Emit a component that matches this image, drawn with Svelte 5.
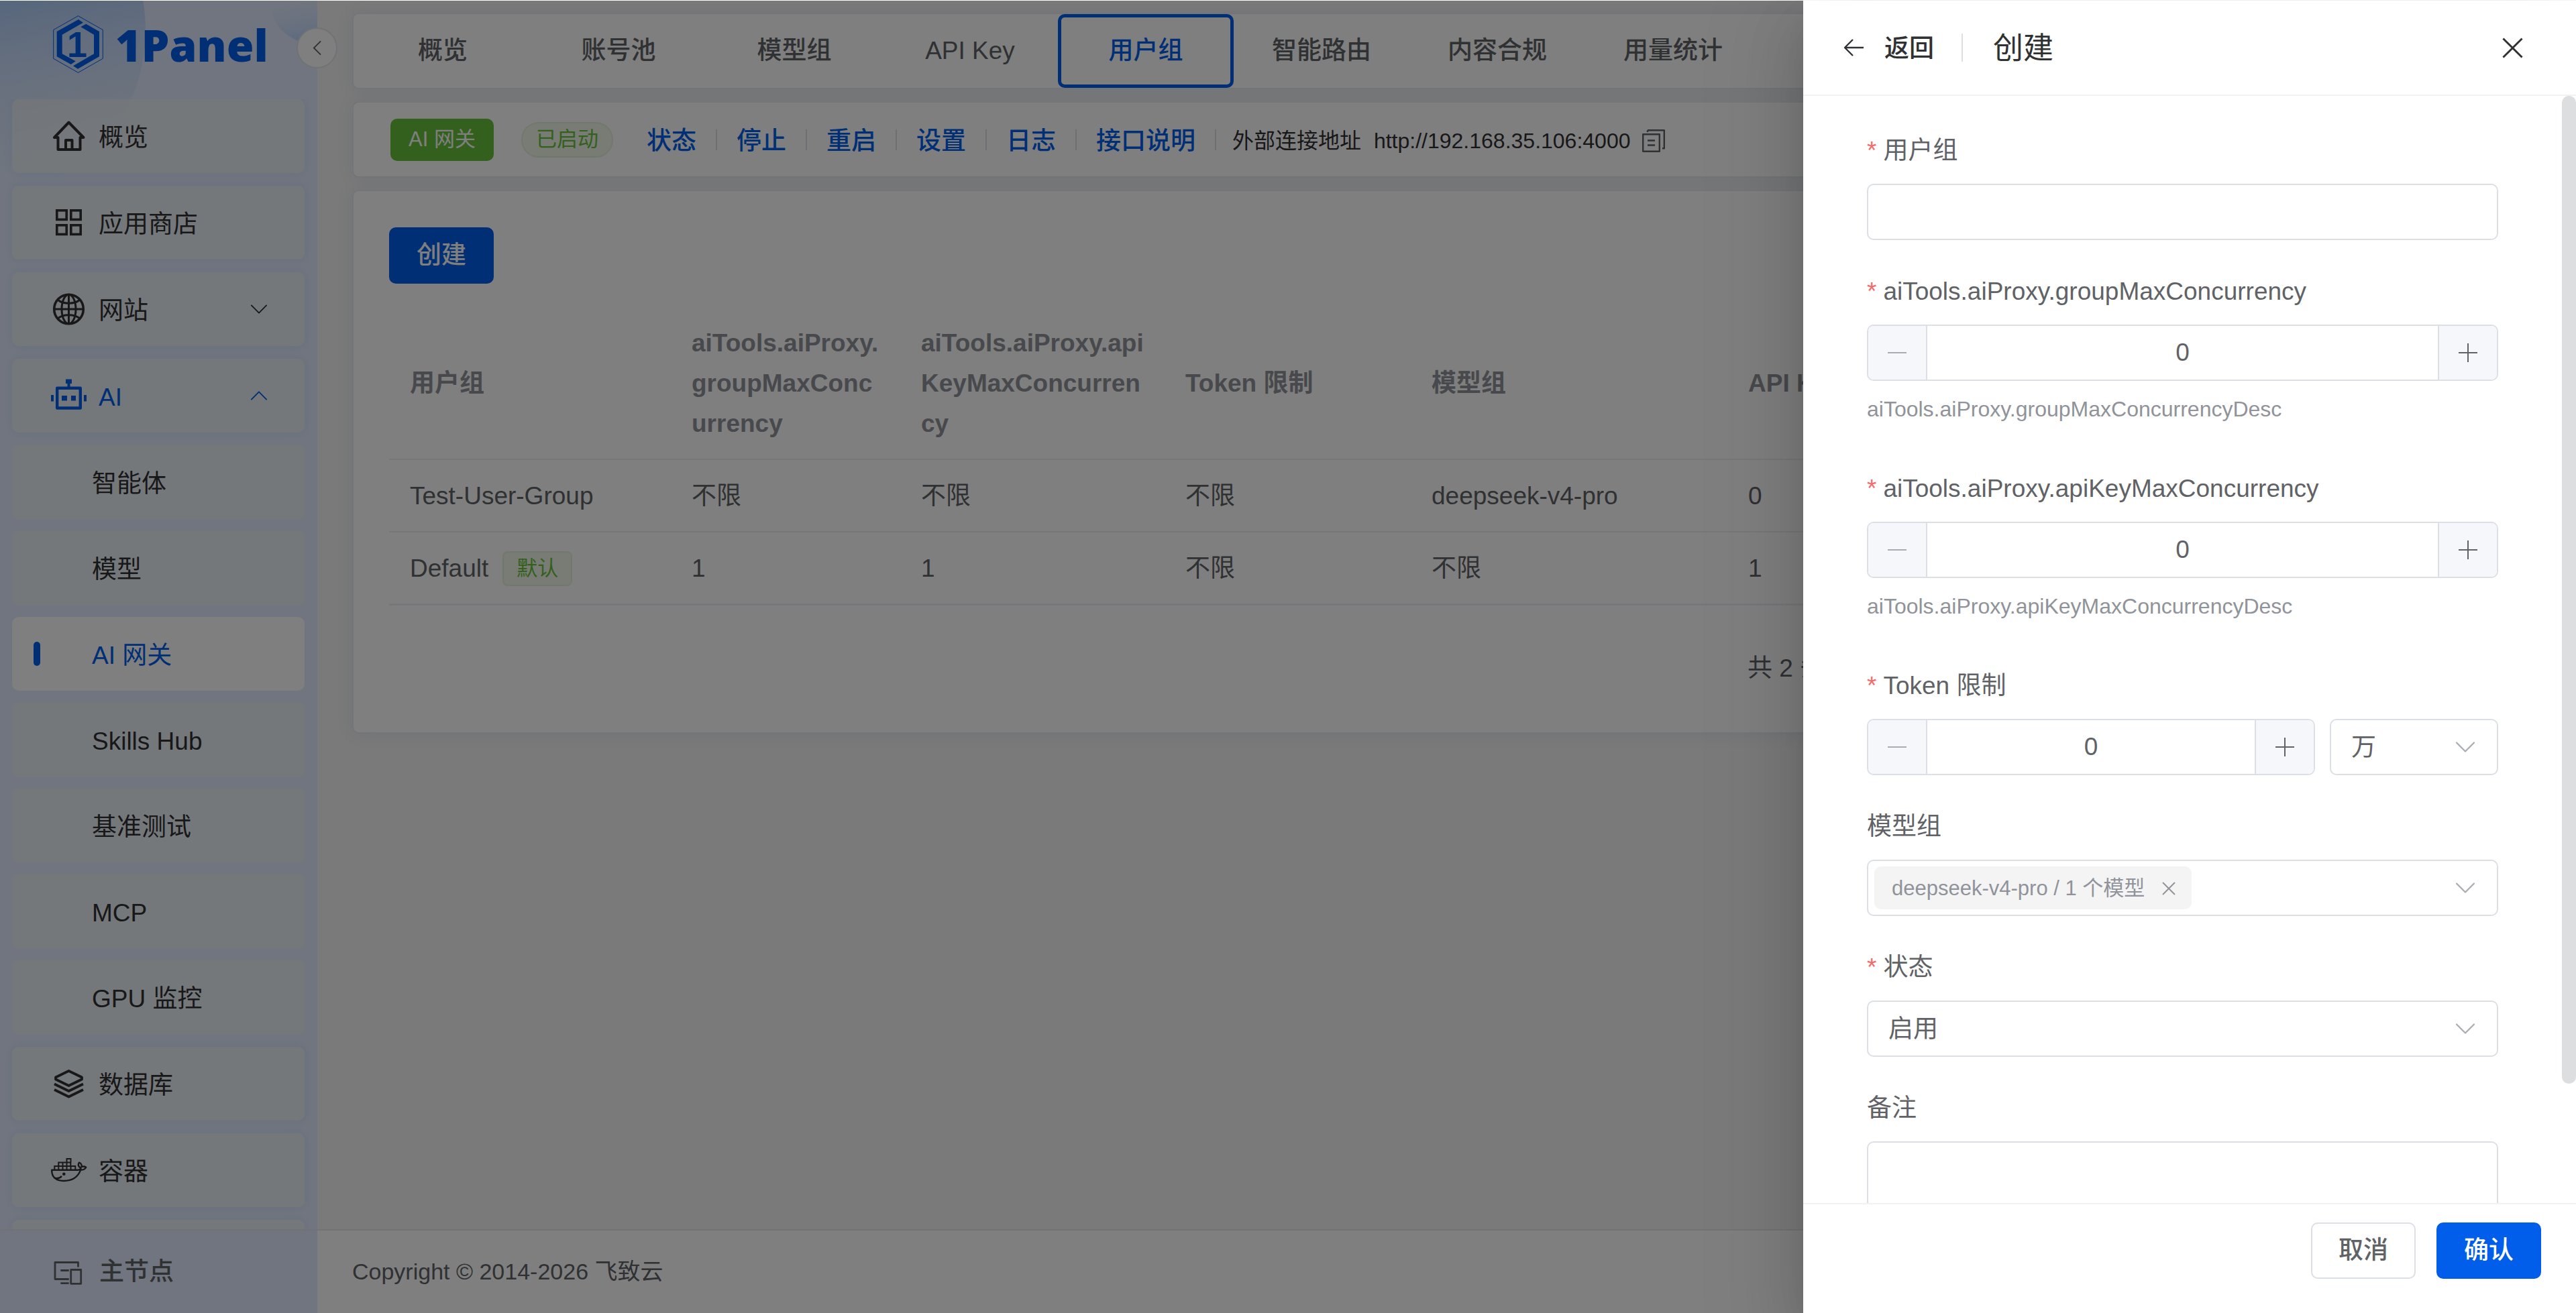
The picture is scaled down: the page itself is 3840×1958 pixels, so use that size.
<script>
  const topItems = [
    { label: '概览', icon: 'home' },
    { label: '应用商店', icon: 'apps' },
    { label: '网站', icon: 'globe', arrow: 'down' },
    { label: 'AI', icon: 'robot', arrow: 'up', open: true }
  ];
  const subItems = ['智能体', '模型', 'AI 网关', 'Skills Hub', '基准测试', 'MCP', 'GPU 监控'];
  const lowerItems = [
    { label: '数据库', icon: 'layers' },
    { label: '容器', icon: 'docker' }
  ];
  const tabs = ['概览', '账号池', '模型组', 'API Key', '用户组', '智能路由', '内容合规', '用量统计'];
  const actions = ['状态', '停止', '重启', '设置', '日志', '接口说明'];
  const columns = [
    '用户组',
    'aiTools.aiProxy.groupMaxConcurrency',
    'aiTools.aiProxy.apiKeyMaxConcurrency',
    'Token 限制',
    '模型组',
    'API Key'
  ];
  const rows = [
    ['Test-User-Group', '不限', '不限', '不限', 'deepseek-v4-pro', '0'],
    ['Default', '1', '1', '不限', '不限', '1']
  ];

  let name = $state('');
  let groupMax = $state(0);
  let keyMax = $state(0);
  let tokens = $state(0);
  let unit = $state('万');
  let status = $state('启用');
  let remark = $state('');
</script>

{#snippet icon(kind)}
  <svg class="menu-icon" viewBox="0 0 54 54" fill="none" stroke="currentColor" aria-hidden="true">
    {#if kind === 'home'}
      <path d="M26.5 6.5 5 29h5.500v18H43.500V29H48.500z" stroke-width="4" stroke-linejoin="round" />
      <path d="M22 47V33h9.500v14" stroke-width="4" stroke-linejoin="round" />
    {:else if kind === 'apps'}
      <g stroke-width="3.6">
        <rect x="8.800" y="8.800" width="14.400" height="13.600" />
        <rect x="29.800" y="8.800" width="14.400" height="13.600" />
        <rect x="8.800" y="30.800" width="14.400" height="13.600" />
        <rect x="29.800" y="30.800" width="14.400" height="13.600" />
      </g>
    {:else if kind === 'globe'}
      <g stroke-width="3.600">
        <circle cx="26.500" cy="27" r="21.800" />
        <ellipse cx="26.500" cy="27" rx="10.500" ry="21.800" stroke-width="3" />
        <path d="M26.500 5v44M5 27h43" stroke-width="3" />
        <path d="M10 13c8 7 25 7 33 0M10 41c8-7 25-7 33 0" stroke-width="3" />
      </g>
    {:else if kind === 'robot'}
      <rect x="9.200" y="15.700" width="34.600" height="29.800" stroke-width="4.400" stroke-linejoin="round" />
      <g fill="currentColor" stroke="none">
        <rect x="22" y="2.500" width="9" height="6.500" />
        <rect x="24.500" y="6" width="4" height="9" />
        <rect x="16" y="27" width="8" height="7.500" />
        <rect x="30" y="27" width="7" height="7.500" />
        <rect y="26" width="4" height="9.500" />
        <rect x="49" y="26" width="4" height="9.500" />
      </g>
    {:else if kind === 'layers'}
      <g stroke-width="3.800" stroke-linejoin="round">
        <path d="M26.500 8 46 17.500v3L26.500 30 7 20.500v-3z" />
        <path d="M5 27.500 26.500 38 48 27.500M5 36 26.500 46.500 48 36" />
      </g>
    {:else if kind === 'docker'}
      <path d="M1.200 26.700H41c3-1 4-2 3.500-3-4-2-4.500-5-2.500-8 3 1 4 4 3.600 6.200 3-.8 5-.4 6.600.8-1.500 3-4 4-8 4C40 38 32 43 19 43 7 43 1 37 1.200 26.700z" stroke-width="2.400" stroke-linejoin="round" />
      <path d="M5.300 26V21h31v5M11.300 21v-5.500h18V21M23.500 15.500V10h6v5.500M11.300 21v5M17.500 15.500V26M23.500 15.500V26M29.500 21v5" stroke-width="2" />
      <circle cx="19.300" cy="32.700" r="2.300" fill="currentColor" stroke="none" />
      <path d="M5 38.500c4.500 1.500 8.500.3 11-2.600" stroke-width="2.400" />
    {:else}
      <g stroke-width="2.800" stroke-linejoin="round">
        <path d="M40.500 19.500V12.500H6v25H26.700M14.300 24.500H26.700M14.300 43.700H26.700" />
        <rect x="29.700" y="23.500" width="15" height="20.800" />
      </g>
    {/if}
  </svg>
{/snippet}

{#snippet chevron(cls)}
  <svg class={cls} viewBox="0 0 28 28" fill="none" stroke="currentColor" stroke-width="2.200" aria-hidden="true">
    <path d="M1 7.500 14 20.500 27 7.500" stroke-linecap="round" stroke-linejoin="round" />
  </svg>
{/snippet}

{#snippet stepper(id, value, step)}
  <div class="stepper">
    <button type="button" class="step minus" aria-label="减少" disabled={value <= 0} onclick={() => step(-1)}>
      <svg viewBox="0 0 28 28" stroke="currentColor" stroke-width="2"><path d="M0 14h28" /></svg>
    </button>
    <input {id} type="text" inputmode="numeric" {value} readonly />
    <button type="button" class="step plus" aria-label="增加" onclick={() => step(1)}>
      <svg viewBox="0 0 28 28" stroke="currentColor" stroke-width="2"><path d="M0 14h28M14 0v28" /></svg>
    </button>
  </div>
{/snippet}

<div class="app">
  <aside class="sidebar">
    <svg class="glow" viewBox="0 0 473 310" aria-hidden="true">
      <defs>
        <linearGradient id="glow-a" x1="0.500" y1="0.300" x2="0.620" y2="1">
          <stop offset="0" stop-color="#98c0f8" />
          <stop offset="1" stop-color="#e1ebfe" stop-opacity="0" />
        </linearGradient>
        <linearGradient id="glow-b" x1="0.400" y1="0.450" x2="0.500" y2="1">
          <stop offset="0" stop-color="#e1ebfe" stop-opacity="0" />
          <stop offset="1" stop-color="#b0d0ff" />
        </linearGradient>
      </defs>
      <circle cx="-37" cy="44" r="254" fill="url(#glow-a)" />
      <circle cx="468" cy="-3" r="67" fill="url(#glow-b)" />
    </svg>

    <div class="brand">
      <svg class="emblem" viewBox="0 0 75 86" aria-hidden="true">
        <path d="M37.500.7 74.300 21.500V64.300L37.500 85.300.7 64.300V21.500z" fill="none" stroke="currentColor" stroke-width="1" />
        <path d="M38 6 45 10.700 13.700 28.700V57.300L33.700 68.300 26.700 73 5.700 61.300V24z" fill="currentColor" />
        <path d="M49.300 12.700 69 24V61.300L37 79.700 30 75.300 61 57.300V28.700L41.300 17z" fill="currentColor" />
        <text x="36" y="62" text-anchor="middle" class="emblem-digit">1</text>
      </svg>
      <span class="wordmark">1Panel</span>
    </div>
    <button type="button" class="collapse" aria-label="收起菜单">
      <svg viewBox="0 0 14 24" fill="none" stroke="currentColor" stroke-width="2"><path d="M13 1 2 12 13 23" /></svg>
    </button>

    <nav class="menu">
      {#each topItems as item}
        <a href="#top" class="item" class:open={item.open}>
          {@render icon(item.icon)}
          <span>{item.label}</span>
          {#if item.arrow}
            {@render chevron(item.arrow === 'up' ? 'arrow flip' : 'arrow')}
          {/if}
        </a>
      {/each}
      <div class="submenu">
        {#each subItems as label}
          <a href="#sub" class="item sub" class:active={label === 'AI 网关'}><span>{label}</span></a>
        {/each}
      </div>
      {#each lowerItems as item}
        <a href="#low" class="item">
          {@render icon(item.icon)}
          <span>{item.label}</span>
        </a>
      {/each}
      <div class="item"></div>
    </nav>

    <div class="node">
      {@render icon('node')}
      <span>主节点</span>
    </div>
  </aside>

  <div class="main">
    <main class="content">
      <div class="card tabs" role="tablist">
        {#each tabs as tab}
          <button type="button" role="tab" class="tab" class:current={tab === '用户组'} aria-selected={tab === '用户组'}>{tab}</button>
        {/each}
      </div>

      <div class="card statusbar">
        <span class="tag-solid">AI 网关</span>
        <span class="tag-round">已启动</span>
        {#each actions as action}
          <button type="button" class="link">{action}</button>
          <i class="bar"></i>
        {/each}
        <span class="addr">外部连接地址</span>
        <span class="addr url">http://192.168.35.106:4000</span>
        <button type="button" class="copy" aria-label="复制">
          <svg viewBox="0 0 34 34" fill="none" stroke="currentColor" stroke-width="2.400">
            <path d="M1.200 7.200h24.600v25.600H1.200zM8 1.200h24.800v27H30M8 1.200V4M8 16.500h11M8 23.500h11" stroke-linejoin="round" />
          </svg>
        </button>
      </div>

      <section class="card panel">
        <button type="button" class="btn primary">创建</button>
        <table>
          <colgroup>
            <col class="c1" /><col class="c2" /><col class="c3" /><col class="c4" /><col class="c5" /><col />
          </colgroup>
          <thead>
            <tr>
              {#each columns as col}<th scope="col">{col}</th>{/each}
            </tr>
          </thead>
          <tbody>
            {#each rows as row}
              <tr>
                {#each row as cell, i}
                  <td>
                    {#if i === 0 && cell === 'Default'}
                      <div class="named"><span>{cell}</span><span class="tag-plain">默认</span></div>
                    {:else}
                      {cell}
                    {/if}
                  </td>
                {/each}
              </tr>
            {/each}
          </tbody>
        </table>
        <div class="pager"><span>共 2 条</span></div>
      </section>
    </main>

    <footer class="copyright">Copyright © 2014-2026 飞致云</footer>
  </div>

  <div class="overlay">
    <div class="drawer" role="dialog" aria-label="创建">
      <header class="drawer-head">
        <button type="button" class="back">
          <svg viewBox="0 0 30 26" fill="none" stroke="currentColor" stroke-width="2.400">
            <path d="M14 1 2 13 14 25M2 13H30" stroke-linejoin="round" />
          </svg>
          <span>返回</span>
        </button>
        <i class="head-bar"></i>
        <h1>创建</h1>
        <button type="button" class="close" aria-label="关闭">
          <svg viewBox="0 0 32 32" stroke="currentColor" stroke-width="3"><path d="M1.500 1.500 30.500 30.500M30.500 1.500 1.500 30.500" /></svg>
        </button>
      </header>

      <div class="drawer-body">
        <form class="form">
          <div class="field">
            <label for="f-name" class="required">用户组</label>
            <input id="f-name" class="box" type="text" bind:value={name} />
          </div>
          <div class="field">
            <label for="f-group" class="required">aiTools.aiProxy.groupMaxConcurrency</label>
            {@render stepper('f-group', groupMax, (d) => (groupMax += d))}
            <p>aiTools.aiProxy.groupMaxConcurrencyDesc</p>
          </div>
          <div class="field">
            <label for="f-key" class="required">aiTools.aiProxy.apiKeyMaxConcurrency</label>
            {@render stepper('f-key', keyMax, (d) => (keyMax += d))}
            <p>aiTools.aiProxy.apiKeyMaxConcurrencyDesc</p>
          </div>
          <div class="field">
            <label for="f-token" class="required">Token 限制</label>
            <div class="pair">
              {@render stepper('f-token', tokens, (d) => (tokens += d))}
              <div class="select unit">
                <select class="box" aria-label="单位" bind:value={unit}>
                  <option>万</option>
                  <option>亿</option>
                </select>
                {@render chevron('caret')}
              </div>
            </div>
          </div>
          <div class="field">
            <label for="f-models">模型组</label>
            <div class="box multi">
              <span class="chip">
                deepseek-v4-pro / 1 个模型
                <button type="button" aria-label="移除">
                  <svg viewBox="0 0 20 20" stroke="currentColor" stroke-width="2"><path d="M1 1 19 19M19 1 1 19" /></svg>
                </button>
              </span>
              <input id="f-models" type="text" role="combobox" aria-expanded="false" aria-controls="f-models" />
              {@render chevron('caret')}
            </div>
          </div>
          <div class="field">
            <label for="f-status" class="required">状态</label>
            <div class="select">
              <select id="f-status" class="box" bind:value={status}>
                <option>启用</option>
                <option>停用</option>
              </select>
              {@render chevron('caret')}
            </div>
          </div>
          <div class="field">
            <label for="f-remark">备注</label>
            <textarea id="f-remark" class="box" bind:value={remark}></textarea>
          </div>
        </form>
        <div class="thumb"></div>
      </div>

      <footer class="drawer-foot">
        <button type="button" class="btn">取消</button>
        <button type="button" class="btn primary">确认</button>
      </footer>
    </div>
  </div>
</div>

<style>
  :global(body) {
    overflow: hidden;
  }

  .app,
  .app :global(*) {
    box-sizing: border-box;
  }

  .app {
    position: relative;
    display: flex;
    height: 100vh;
    border-top: 1px solid #fff;
    font-family: 'Liberation Sans', 'Noto Sans CJK SC', sans-serif;
    font-size: 37px;
    line-height: 60px;
    color: #606266;
    background: #f4f4f4;
  }

  button,
  input,
  select,
  textarea {
    margin: 0;
    padding: 0;
    border: 0;
    background: none;
    font: inherit;
    color: inherit;
    outline: none;
  }

  svg {
    display: block;
    flex: none;
  }

  a {
    text-decoration: none;
  }

  /* Sidebar */
  .sidebar {
    position: relative;
    z-index: 1;
    display: flex;
    flex-direction: column;
    flex: none;
    width: 473px;
    background: #e1ebfe;
  }

  .glow {
    position: absolute;
    top: 0;
    left: 0;
    width: 100%;
  }

  .brand {
    position: relative;
    display: flex;
    flex: none;
    align-items: center;
    gap: 18px;
    height: 129px;
    margin-bottom: 18px;
    padding-left: 79px;
    color: #005eeb;
  }

  .emblem {
    width: 75px;
    height: 86px;
  }

  .emblem-digit {
    font: 700 54px 'Liberation Sans', sans-serif;
    fill: currentColor;
  }

  .wordmark {
    font-family: 'Noto Sans', sans-serif;
    font-size: 66px;
    font-weight: 900;
  }

  .collapse {
    position: absolute;
    top: 40px;
    right: -30px;
    display: flex;
    align-items: center;
    justify-content: center;
    width: 61px;
    height: 61px;
    border: 2px solid #e1e4ee;
    border-radius: 50%;
    background: #fff;
  }

  .collapse svg {
    width: 13px;
    height: 23px;
  }

  .menu {
    position: relative;
    display: flex;
    flex: 1;
    flex-direction: column;
    gap: 19px;
    min-height: 0;
    padding: 0 19px 0 18px;
    overflow: hidden;
  }

  .submenu {
    display: flex;
    flex: none;
    flex-direction: column;
    gap: 18px;
  }

  .item {
    position: relative;
    display: flex;
    flex: none;
    align-items: center;
    gap: 17px;
    height: 110px;
    padding-left: 58px;
    border-radius: 10px;
    background: rgba(244, 246, 240, 0.5);
    box-shadow: 0 0 16px rgba(0, 94, 235, 0.07);
    color: #303133;
  }

  .item span {
    padding-top: 5px;
  }

  .sub {
    padding-left: 119px;
    box-shadow: none;
  }

  .open {
    color: #005eeb;
  }

  .active {
    background: #fff;
    color: #005eeb;
  }

  .active::before {
    content: '';
    position: absolute;
    left: 32px;
    width: 10px;
    height: 36px;
    border-radius: 5px;
    background: #005eeb;
  }

  .menu-icon {
    width: 54px;
    height: 54px;
  }

  .arrow {
    width: 24px;
    height: 24px;
    margin: 0 56px 0 auto;
  }

  .flip {
    rotate: 180deg;
  }

  .node {
    position: relative;
    display: flex;
    flex: none;
    align-items: center;
    gap: 18px;
    height: 125px;
    padding-left: 76px;
    border-top: 2px solid #e4e3e8;
    background: #e1ebfe;
    font-weight: 500;
  }

  /* Main column */
  .main {
    display: flex;
    flex: 1;
    flex-direction: column;
    min-width: 0;
  }

  .content {
    display: flex;
    flex: 1;
    flex-direction: column;
    gap: 18px;
    min-height: 0;
    padding: 18px 52px 0;
    overflow: hidden;
  }

  .card {
    flex: none;
    border: 2px solid #e8e9f2;
    border-radius: 10px;
    background: #fff;
    box-shadow: 0 0 26px rgba(0, 70, 180, 0.08);
  }

  .tabs {
    display: flex;
    padding-left: 2px;
  }

  .tab {
    width: 262px;
    height: 110px;
    border-radius: 10px;
    font-weight: 500;
  }

  .current {
    border: 5px solid #005eeb;
    color: #005eeb;
  }

  .statusbar {
    display: flex;
    align-items: center;
    height: 114px;
    padding-left: 55px;
  }

  .tag-solid,
  .tag-round,
  .tag-plain {
    font-size: 31px;
    white-space: nowrap;
  }

  .tag-solid {
    height: 63px;
    padding: 0 27px;
    border-radius: 10px;
    background: #67c23a;
    color: #fff;
    line-height: 61px;
  }

  .tag-round,
  .tag-plain {
    border: 2px solid #e1f3d8;
    background: #f0f9eb;
    color: #67c23a;
    line-height: 47px;
  }

  .tag-round {
    height: 53px;
    margin: 0 50px 0 41px;
    padding: 0 20px;
    border-radius: 26px;
  }

  .tag-plain {
    height: 52px;
    padding: 0 19px;
    border-radius: 8px;
  }

  .link {
    padding-top: 6px;
    color: #005eeb;
    font-weight: 500;
  }

  .bar {
    width: 2px;
    height: 31px;
    margin: 0 29px;
    background: #dcdfe6;
  }

  .addr {
    margin-left: -5px;
    padding-top: 4px;
    font-size: 32px;
    color: #303133;
    white-space: nowrap;
  }

  .url {
    margin-left: 19px;
  }

  .copy {
    margin-left: 18px;
    padding-top: 3px;
  }

  .copy svg {
    width: 34px;
    height: 34px;
  }

  .panel {
    padding: 54px 53px 53px;
  }

  .btn {
    height: 84px;
    padding: 0 39px;
    border: 2px solid #dcdfe6;
    border-radius: 10px;
    background: #fff;
    font-weight: 500;
    line-height: 76px;
  }

  .primary {
    border-color: #005eeb;
    background: #005eeb;
    color: #fff;
  }

  table {
    width: 100%;
    margin-top: 35px;
    border-collapse: separate;
    border-spacing: 0;
    border-bottom: 1px solid #ebeef5;
    table-layout: fixed;
  }

  .c1 {
    width: 420px;
  }

  .c2 {
    width: 342px;
  }

  .c3 {
    width: 394px;
  }

  .c4 {
    width: 367px;
  }

  .c5 {
    width: 472px;
  }

  th,
  td {
    padding: 24px 31px 22px;
    border-bottom: 2px solid #ebeef5;
    text-align: left;
    vertical-align: middle;
    overflow-wrap: anywhere;
  }

  th {
    color: #909399;
    font-weight: 700;
  }

  .named {
    display: flex;
    align-items: center;
    gap: 21px;
  }

  .pager {
    display: flex;
    justify-content: flex-end;
    margin-top: 52px;
    line-height: 84px;
  }

  .pager span {
    width: 1128px;
  }

  .copyright {
    flex: none;
    height: 125px;
    padding-left: 52px;
    border-top: 2px solid #e4e5ee;
    background: #fff;
    font-size: 34px;
    line-height: 123px;
  }

  /* Drawer */
  .overlay {
    position: absolute;
    inset: 0;
    z-index: 2;
    display: flex;
    justify-content: flex-end;
    background: rgba(0, 0, 0, 0.5);
  }

  .drawer {
    display: flex;
    flex-direction: column;
    width: 30%;
    background: #fff;
    box-shadow:
      0 42px 126px 42px rgba(0, 0, 0, 0.08),
      0 32px 84px rgba(0, 0, 0, 0.12),
      0 21px 42px -21px rgba(0, 0, 0, 0.16);
  }

  .drawer-head {
    display: flex;
    flex: none;
    align-items: center;
    height: 142px;
    padding: 0 79px 0 60px;
    border-bottom: 2px solid #f2f2f2;
    color: #303133;
  }

  .back {
    display: flex;
    align-items: center;
    gap: 31px;
    font-weight: 500;
  }

  .back svg {
    width: 30px;
    height: 26px;
  }

  .back span,
  h1 {
    padding-top: 4px;
  }

  .head-bar {
    width: 2px;
    height: 42px;
    margin: 0 45px 0 41px;
    background: #dcdfe6;
  }

  h1 {
    margin: 0;
    font-size: 45px;
    font-weight: 400;
  }

  .close {
    margin-left: auto;
  }

  .close svg {
    width: 31px;
    height: 31px;
  }

  .drawer-body {
    position: relative;
    flex: 1;
    min-height: 0;
    overflow: hidden;
  }

  .form {
    display: flex;
    flex-direction: column;
    gap: 47px;
    padding: 52px 116px 52px 95px;
  }

  .field {
    display: flex;
    flex-direction: column;
  }

  label {
    margin-bottom: 20px;
    padding-top: 1px;
    line-height: 58px;
  }

  .required::before {
    content: '*';
    margin-right: 10px;
    color: #f56c6c;
  }

  .box,
  .stepper {
    width: 100%;
    height: 84px;
    border: 2px solid #dcdfe6;
    border-radius: 10px;
    background: #fff;
  }

  input.box {
    padding: 0 29px;
  }

  textarea.box {
    height: 190px;
    resize: none;
  }

  .stepper {
    display: flex;
    overflow: hidden;
  }

  .stepper input {
    flex: 1;
    min-width: 0;
    text-align: center;
  }

  .step {
    display: flex;
    align-items: center;
    justify-content: center;
    width: 88px;
    background: #f5f7fa;
  }

  .step svg {
    width: 28px;
    height: 28px;
  }

  .minus {
    border-right: 2px solid #dcdfe6;
    color: #a8abb2;
  }

  .plus {
    border-left: 2px solid #dcdfe6;
  }

  .field p {
    margin: 0;
    font-size: 32px;
    line-height: 84px;
    color: #909399;
  }

  .pair {
    display: flex;
    gap: 22px;
  }

  .select {
    position: relative;
  }

  .unit {
    flex: none;
    width: 251px;
  }

  select.box {
    padding: 2px 30px 0;
    appearance: none;
  }

  .field :global(.caret) {
    width: 28px;
    height: 28px;
    color: #a8abb2;
  }

  .select :global(.caret) {
    position: absolute;
    top: 28px;
    right: 35px;
    pointer-events: none;
  }

  .multi {
    display: flex;
    align-items: center;
    padding: 0 33px 0 9px;
  }

  .multi input {
    flex: 1;
    min-width: 0;
  }

  .chip {
    display: flex;
    align-items: center;
    gap: 26px;
    height: 64px;
    padding: 2px 24px 0 26px;
    border-radius: 10px;
    background: #f4f4f5;
    color: #909399;
    font-size: 31px;
    white-space: nowrap;
  }

  .chip svg {
    width: 20px;
    height: 20px;
  }

  .thumb {
    position: absolute;
    top: 0;
    right: 0;
    bottom: 178px;
    width: 21px;
    border-radius: 10px;
    background: #dddee0;
  }

  .drawer-foot {
    display: flex;
    flex: none;
    justify-content: flex-end;
    gap: 31px;
    height: 164px;
    padding: 27px 52px 0 0;
    border-top: 2px solid #f2f2f2;
  }
</style>
